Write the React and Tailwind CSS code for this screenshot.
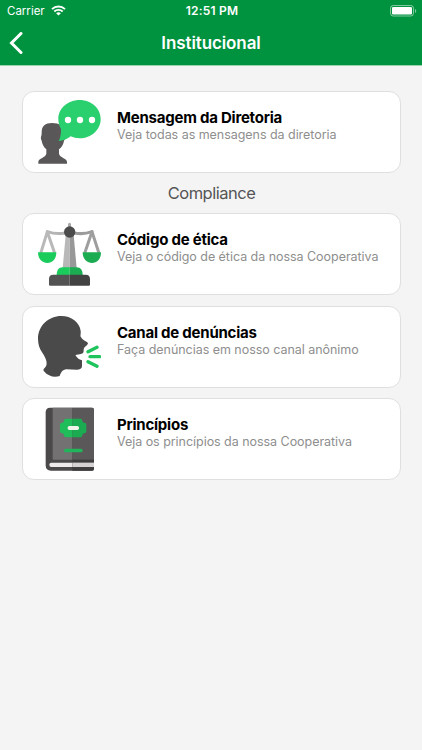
import React from "react";

function WifiIcon() {
  return (
    <svg width="15" height="11" viewBox="0 0 15 11" fill="none" stroke="#fff">
      <path d="M1 4.1C4.6 .6 10.4 .6 14 4.1" strokeWidth="1.9" />
      <path d="M3.3 6.5C5.6 4.3 9.4 4.3 11.7 6.5" strokeWidth="1.8" />
      <path d="M5.1 8.2C6.5 7 8.5 7 9.9 8.2L7.5 10.6Z" fill="#fff" stroke="none" />
    </svg>
  );
}

function BatteryIcon() {
  return (
    <svg width="27" height="12" viewBox="0 0 27 12" fill="none">
      <rect x=".5" y=".5" width="23" height="10.5" rx="2.7" stroke="#fff" strokeOpacity=".5" />
      <rect x="2" y="2" width="20" height="7.5" rx="1.3" fill="#fff" />
      <path d="M25 4v4c1.7-.7 1.7-3.3 0-4Z" fill="#fff" fillOpacity=".5" />
    </svg>
  );
}

function MessageIcon() {
  return (
    <svg className="size-16 shrink-0" viewBox="66 45 192 192">
      <path
        d="M111 114C91 114 80 123 80 141C80 146 80 149 79 152C77 155 77 162 80 167C82 179 87 187 94 193V206C92 218 71 219 70 230V236H156V230C155 219 134 218 132 206V193C140 187 145 179 147 167C151 163 151 155 148 152V141C147 123 133 114 111 114Z"
        fill="#595758"
      />
      <path
        d="M194 45C229 45 257 70 257 102S229 160 194 160C184 160 175 158 167 154C158 162 145 167 131 168C136 160 138 149 138 132C133 123 130 113 130 102C130 70 159 45 194 45Z"
        fill="#2acf6e"
      />
      <g fill="#fff">
        <circle cx="159" cy="105" r="9.5" />
        <circle cx="195" cy="105" r="9.5" />
        <circle cx="231" cy="105" r="9.5" />
      </g>
    </svg>
  );
}

function ScalesIcon() {
  return (
    <svg className="size-16 shrink-0" viewBox="66 51 192 192">
      <path d="M159 57Q164 49 168 57V70H159Z" fill="#aaa" />
      <g fill="none" strokeWidth="9" strokeLinecap="round" strokeLinejoin="round">
        <path d="M150 84C128 88 111 85 97 80" stroke="#b4b4b4" />
        <path d="M178 84C199 88 217 85 231 80" stroke="#9b9b9b" />
        <path d="M78 142L97 80L118 142" stroke="#b9b9b9" />
        <path d="M210 142L231 80L251 142" stroke="#9e9e9e" />
      </g>
      <path d="M152 90H164V190H143Z" fill="#b8b8b8" />
      <path d="M164 90H176L185 190H164Z" fill="#989898" />
      <path d="M69 142H124C124 161 113 174 97 174S69 161 69 142Z" fill="#19cc5b" />
      <path d="M203 142H258C258 161 247 174 231 174S203 161 203 142Z" fill="#1bac52" />
      <path d="M164 187H143C131 187 125 195 125 211H164Z" fill="#19cc5b" />
      <path d="M164 187H185C197 187 203 195 203 211H164Z" fill="#1bac52" />
      <path d="M164 209H115Q102 209 102 222V239Q102 242 106 242H164Z" fill="#535353" />
      <path d="M164 209H212Q225 209 225 222V239Q225 242 221 242H164Z" fill="#424242" />
      <circle cx="164" cy="81" r="17" fill="#4b4b4b" />
    </svg>
  );
}

function SpeakIcon() {
  return (
    <svg className="size-16 shrink-0" viewBox="66 45 192 192">
      <path
        d="M139 48C169 48 194 67 197 93C198 104 195 106 198 112C203 121 210 122 217 127C221 131 218 134 213 138C207 142 206 145 206 151C206 159 203 162 194 163L181 165C187 174 191 178 201 181V198C201 206 195 209 185 209L154 208C143 209 138 217 134 228C119 234 99 229 87 214C84 211 85 207 89 204C101 193 93 174 82 158C73 145 69 132 69 116C69 77 101 48 139 48Z"
        fill="#4a4a4a"
      />
      <path
        d="M219 155L246 142M225 170H254M219 185L246 199"
        fill="none"
        stroke="#20c45c"
        strokeWidth="10"
        strokeLinecap="round"
      />
    </svg>
  );
}

function BookIcon() {
  return (
    <svg className="size-16 shrink-0" viewBox="66 43 192 192">
      <path d="M105 45H231Q237 45 237 51V228Q237 234 231 234H108Q92 234 92 218V59Q92 45 105 45Z" fill="#4b494a" />
      <path d="M113 45H172V201H113Z" fill="#737172" />
      <path d="M172 45H231Q237 45 237 51V201H172Z" fill="#5a5859" />
      <path d="M172 201H237V209H172ZM172 224H237V228Q237 234 231 234H172Z" fill="#3f3d3e" />
      <path d="M109 210H172V223H109Q103 223 103 216.500T109 210Z" fill="#eeeaec" />
      <path d="M172 210H237V223H172Z" fill="#d6d2d4" />
      <path d="M172 78H153Q147 78 147 84Q147 90 141 90Q135 90 135 96V116Q135 122 141 122Q147 122 147 128Q147 134 153 134H172Z" fill="#20bd5b" />
      <path d="M172 78H196Q202 78 202 84Q202 90 208 90Q214 90 214 96V116Q214 122 208 122Q202 122 202 128Q202 134 196 134H172Z" fill="#1bac52" />
      <rect x="158" y="100" width="34" height="12" rx="5" fill="#f1f4e9" />
      <rect x="147" y="168" width="56" height="11" rx="5" fill="#21b45b" />
    </svg>
  );
}

function Card({ icon, title, text }) {
  return (
    <button className="flex h-[82px] w-full items-start rounded-xl border border-[#dfdfdf] bg-white pt-2 pl-3.5 text-left">
      {icon}
      <div className="ml-4 pt-2">
        <h2 className="text-[15px] leading-[19px] font-bold tracking-[-0.23px] whitespace-nowrap text-black">{title}</h2>
        <p className="text-[12.500px] leading-[15px] tracking-[-0.04px] whitespace-nowrap text-[#8e8e8e]">{text}</p>
      </div>
    </button>
  );
}

export default function App() {
  return (
    <div className="min-h-screen bg-[#f4f4f4] font-['Inter',sans-serif]">
      <header className="h-[66px] border-b border-[#9bd3ae] bg-[#00933f] text-white">
        {/* Status bar */}
        <div className="grid h-[22px] grid-cols-3 items-center pr-[5px] pl-[7px] text-xs">
          <div className="flex items-center gap-1.5">
            <span className="pt-px text-[11.500px]">Carrier</span>
            <WifiIcon />
          </div>
          <span className="text-center font-semibold tracking-[0.2px]">12:51 PM</span>
          <div className="flex justify-end">
            <BatteryIcon />
          </div>
        </div>

        {/* Title bar */}
        <div className="grid h-[42px] grid-cols-[40px_1fr_40px] items-center">
          <button aria-label="Voltar" className="pl-[9px]">
            <svg width="14" height="22" viewBox="0 0 14 22" fill="none" stroke="#fff" strokeWidth="3">
              <path d="M12 1.500L2.500 11L12 20.500" strokeLinecap="round" />
            </svg>
          </button>
          <h1 className="pt-0.5 text-center text-[17px] font-semibold tracking-[-0.1px]">Institucional</h1>
        </div>
      </header>

      <main className="pt-[25px] pr-[21px] pl-[22px]">
        <Card icon={<MessageIcon />} title="Mensagem da Diretoria" text="Veja todas as mensagens da diretoria" />
        <h2 className="flex h-10 items-center justify-center text-[16.500px] tracking-[-0.5px] text-[#555]">Compliance</h2>
        <div className="flex flex-col gap-[10.500px]">
          <Card icon={<ScalesIcon />} title="Código de ética" text="Veja o código de ética da nossa Cooperativa" />
          <Card icon={<SpeakIcon />} title="Canal de denúncias" text="Faça denúncias em nosso canal anônimo" />
          <Card icon={<BookIcon />} title="Princípios" text="Veja os princípios da nossa Cooperativa" />
        </div>
      </main>
    </div>
  );
}
